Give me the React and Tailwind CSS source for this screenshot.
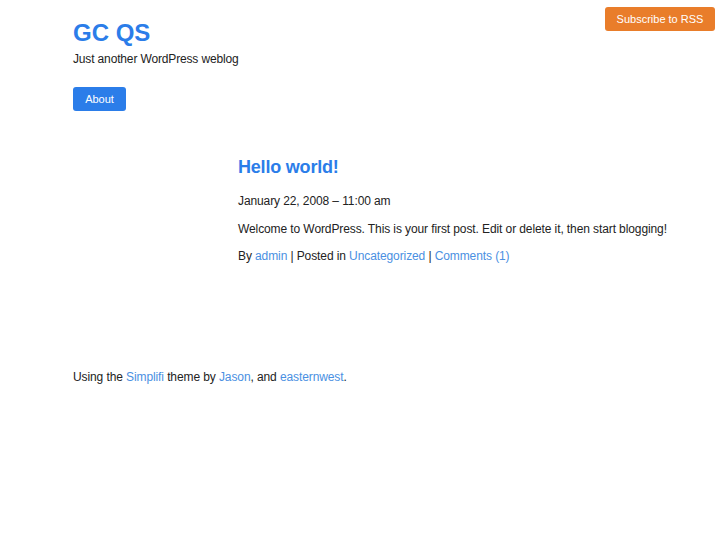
export default function App() {
  return (
    <div className="relative min-h-[545px] bg-white font-['Liberation_Sans',Arial,sans-serif] text-[#222]">
      <a className="absolute right-[12px] top-[7px] flex h-[24px] w-[110px] items-center justify-center rounded-[3px] bg-[#e97d2a] text-[11px] text-white">
        Subscribe to RSS
      </a>
      <div className="px-[73px] pt-[18px]">
        <h1 className="text-[24px] font-bold leading-[30px] text-[#2b7de9]">GC QS</h1>
        <p className="mt-[4px] text-[12px] leading-[14px] tracking-[-0.15px]">Just another WordPress weblog</p>
        <div className="mt-[21px] flex">
          <a className="flex h-[24px] w-[53px] items-center justify-center rounded-[3px] bg-[#2b7de9] text-[11px] text-white">
            About
          </a>
        </div>
        <div className="ml-[165px] mt-[45px] whitespace-nowrap tracking-[-0.1px]">
          <h2 className="text-[18px] font-bold leading-[22px] tracking-[-0.2px] text-[#2b7de9]">Hello world!</h2>
          <p className="mt-[16px] text-[12px] leading-[14px]">January 22, 2008 – 11:00 am</p>
          <p className="mt-[14px] text-[12px] leading-[14px]">
            Welcome to WordPress. This is your first post. Edit or delete it, then start blogging!
          </p>
          <p className="mt-[13px] text-[12px] leading-[14px]">
            By <a className="text-[#4a90e2]">admin</a> | Posted in{" "}
            <a className="text-[#4a90e2]">Uncategorized</a> |{" "}
            <a className="text-[#4a90e2]">Comments (1)</a>
          </p>
        </div>
        <p className="mt-[107px] text-[12px] leading-[14px] tracking-[-0.1px]">
          Using the <a className="text-[#4a90e2]">Simplifi</a> theme by{" "}
          <a className="text-[#4a90e2]">Jason</a>, and{" "}
          <a className="text-[#4a90e2]">easternwest</a>.
        </p>
      </div>
    </div>
  );
}
